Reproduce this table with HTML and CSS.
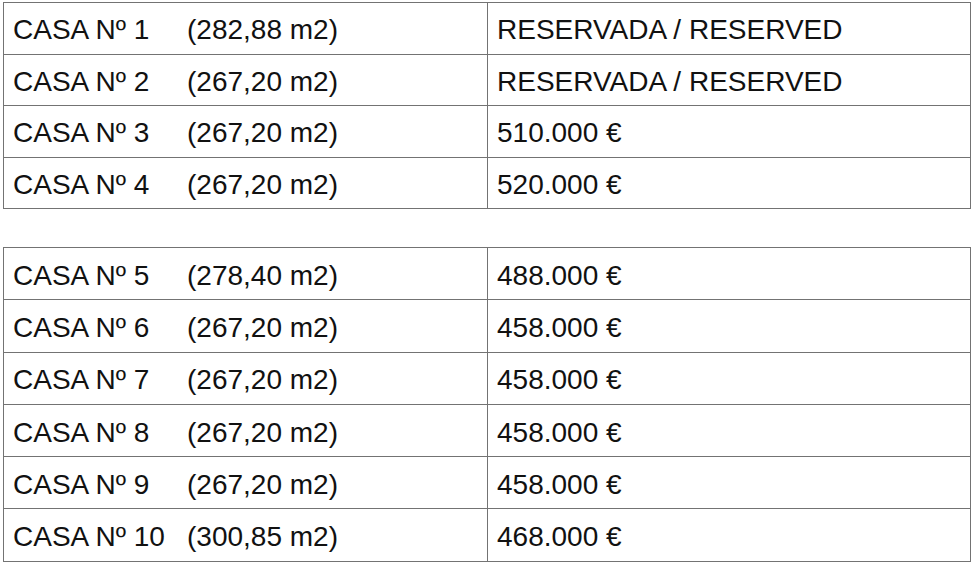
FILE: index.html
```html
<!DOCTYPE html>
<html>
<head>
<meta charset="utf-8">
<link rel="stylesheet" href="styles.css">
</head>
<body>
<table class="prices first">
  <tr><td><span class="name">CASA Nº 1</span><span>(282,88 m2)</span></td><td>RESERVADA / RESERVED</td></tr>
  <tr><td><span class="name">CASA Nº 2</span><span>(267,20 m2)</span></td><td>RESERVADA / RESERVED</td></tr>
  <tr><td><span class="name">CASA Nº 3</span><span>(267,20 m2)</span></td><td>510.000 €</td></tr>
  <tr><td><span class="name">CASA Nº 4</span><span>(267,20 m2)</span></td><td>520.000 €</td></tr>
</table>
<table class="prices second">
  <tr><td><span class="name">CASA Nº 5</span><span>(278,40 m2)</span></td><td>488.000 €</td></tr>
  <tr><td><span class="name">CASA Nº 6</span><span>(267,20 m2)</span></td><td>458.000 €</td></tr>
  <tr><td><span class="name">CASA Nº 7</span><span>(267,20 m2)</span></td><td>458.000 €</td></tr>
  <tr><td><span class="name">CASA Nº 8</span><span>(267,20 m2)</span></td><td>458.000 €</td></tr>
  <tr><td><span class="name">CASA Nº 9</span><span>(267,20 m2)</span></td><td>458.000 €</td></tr>
  <tr><td><span class="name">CASA Nº 10</span><span>(300,85 m2)</span></td><td>468.000 €</td></tr>
</table>
</body>
</html>
```
FILE: styles.css
```css
html, body {
  margin: 0;
  padding: 0;
  background: #ffffff;
}
body {
  padding: 2px 0 0 3px;
  font-family: "Liberation Sans", Arial, sans-serif;
  font-size: 28px;
  color: #111111;
}
.prices {
  border-collapse: collapse;
  width: 968px;
  table-layout: fixed;
}
.prices td {
  border: 1px solid #737373;
  padding: 4px 0 0 9px;
  vertical-align: middle;
  white-space: nowrap;
  box-sizing: border-box;
  line-height: 30px;
}
.prices td:first-child {
  width: 484px;
}
.first tr {
  height: 51.5px;
}
.second {
  margin-top: 38px;
}
.second tr {
  height: 52.3px;
}
.name {
  display: inline-block;
  width: 174px;
}
```
